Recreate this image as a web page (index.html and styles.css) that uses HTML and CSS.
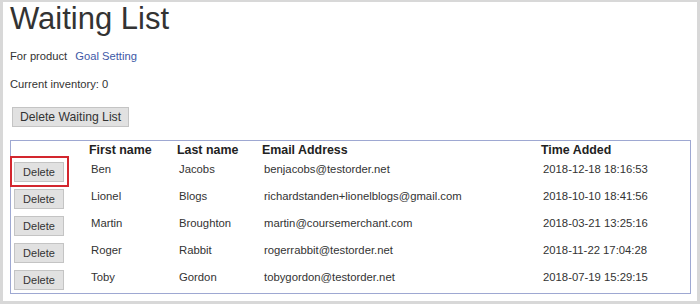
FILE: index.html
```html
<!DOCTYPE html>
<html lang="en">
<head>
  <meta charset="UTF-8" />
  <meta name="viewport" content="width=device-width, initial-scale=1.0" />
  <title>Waiting List</title>
  <link rel="stylesheet" href="styles.css">
</head>
<body>
  <div class="page">
    <h1>Waiting List</h1>
    <p class="info">For product <a href="#" class="product">Goal Setting</a></p>
    <p class="info">Current inventory: 0</p>
    <button class="btn btn-main">Delete Waiting List</button>

    <table class="list">
      <colgroup>
        <col class="c-action">
        <col class="c-first">
        <col class="c-last">
        <col class="c-email">
        <col class="c-time">
      </colgroup>
      <thead>
        <tr>
          <th></th>
          <th>First name</th>
          <th>Last name</th>
          <th>Email Address</th>
          <th>Time Added</th>
        </tr>
      </thead>
      <tbody>
        <tr>
          <td class="action"><span class="highlight"></span><button class="btn btn-small">Delete</button></td>
          <td>Ben</td>
          <td>Jacobs</td>
          <td>benjacobs@testorder.net</td>
          <td>2018-12-18 18:16:53</td>
        </tr>
        <tr>
          <td class="action"><button class="btn btn-small">Delete</button></td>
          <td>Lionel</td>
          <td>Blogs</td>
          <td>richardstanden+lionelblogs@gmail.com</td>
          <td>2018-10-10 18:41:56</td>
        </tr>
        <tr>
          <td class="action"><button class="btn btn-small">Delete</button></td>
          <td>Martin</td>
          <td>Broughton</td>
          <td>martin@coursemerchant.com</td>
          <td>2018-03-21 13:25:16</td>
        </tr>
        <tr>
          <td class="action"><button class="btn btn-small">Delete</button></td>
          <td>Roger</td>
          <td>Rabbit</td>
          <td>rogerrabbit@testorder.net</td>
          <td>2018-11-22 17:04:28</td>
        </tr>
        <tr>
          <td class="action"><button class="btn btn-small">Delete</button></td>
          <td>Toby</td>
          <td>Gordon</td>
          <td>tobygordon@testorder.net</td>
          <td>2018-07-19 15:29:15</td>
        </tr>
      </tbody>
    </table>
  </div>
</body>
</html>
```

FILE: styles.css
```css
html, body {
  margin: 0;
  padding: 0;
  background-color: #ffffff;
}
body {
  font-family: 'Liberation Sans', Arial, sans-serif;
  color: #333333;
}
.page {
  box-sizing: border-box;
  width: 700px;
  height: 304px;
  border-style: solid;
  border-color: #d8d8d8;
  border-width: 2px 3px 3px 3px;
  padding-left: 7px;
}
h1 {
  margin: 0;
  font-size: 31px;
  line-height: 34px;
  font-weight: normal;
  color: #333333;
}
.info {
  margin: 13px 0 0;
  font-size: 11.2px;
  line-height: 14px;
}
.info + .info {
  margin-top: 14px;
}
.product {
  color: #3d58a6;
  text-decoration: none;
  margin-left: 5px;
}
.btn {
  box-sizing: border-box;
  font-family: 'Liberation Sans', Arial, sans-serif;
  background-color: #e1e1e1;
  color: #333333;
  border: 1px solid #c4c4c4;
  border-radius: 0;
  height: 20px;
  padding: 0;
  cursor: pointer;
}
.btn-main {
  display: block;
  margin: 16px 0 0 2px;
  width: 117px;
  font-size: 12.2px;
}
.btn-small {
  display: block;
  width: 50px;
  font-size: 11px;
}
.list {
  margin-top: 13px;
  width: 681px;
  table-layout: fixed;
  border: 1px solid #9ea8d2;
  border-spacing: 0;
}
.c-action { width: 74px; }
.c-first { width: 88px; }
.c-last { width: 85px; }
.c-email { width: 279px; }
.c-time { width: 153px; }
.list th {
  text-align: left;
  font-size: 12.4px;
  line-height: 15px;
  padding: 2px 4px 0;
  color: #222222;
}
.list td {
  vertical-align: top;
  font-size: 11.3px;
  line-height: 14px;
  padding: 4px 4px 3px 6px;
  height: 20px;
}
.list td.action {
  position: relative;
  padding-left: 3px;
}
.highlight {
  position: absolute;
  left: -1px;
  top: -2px;
  width: 55px;
  height: 27px;
  border: 2px solid #d3262e;
}
```
